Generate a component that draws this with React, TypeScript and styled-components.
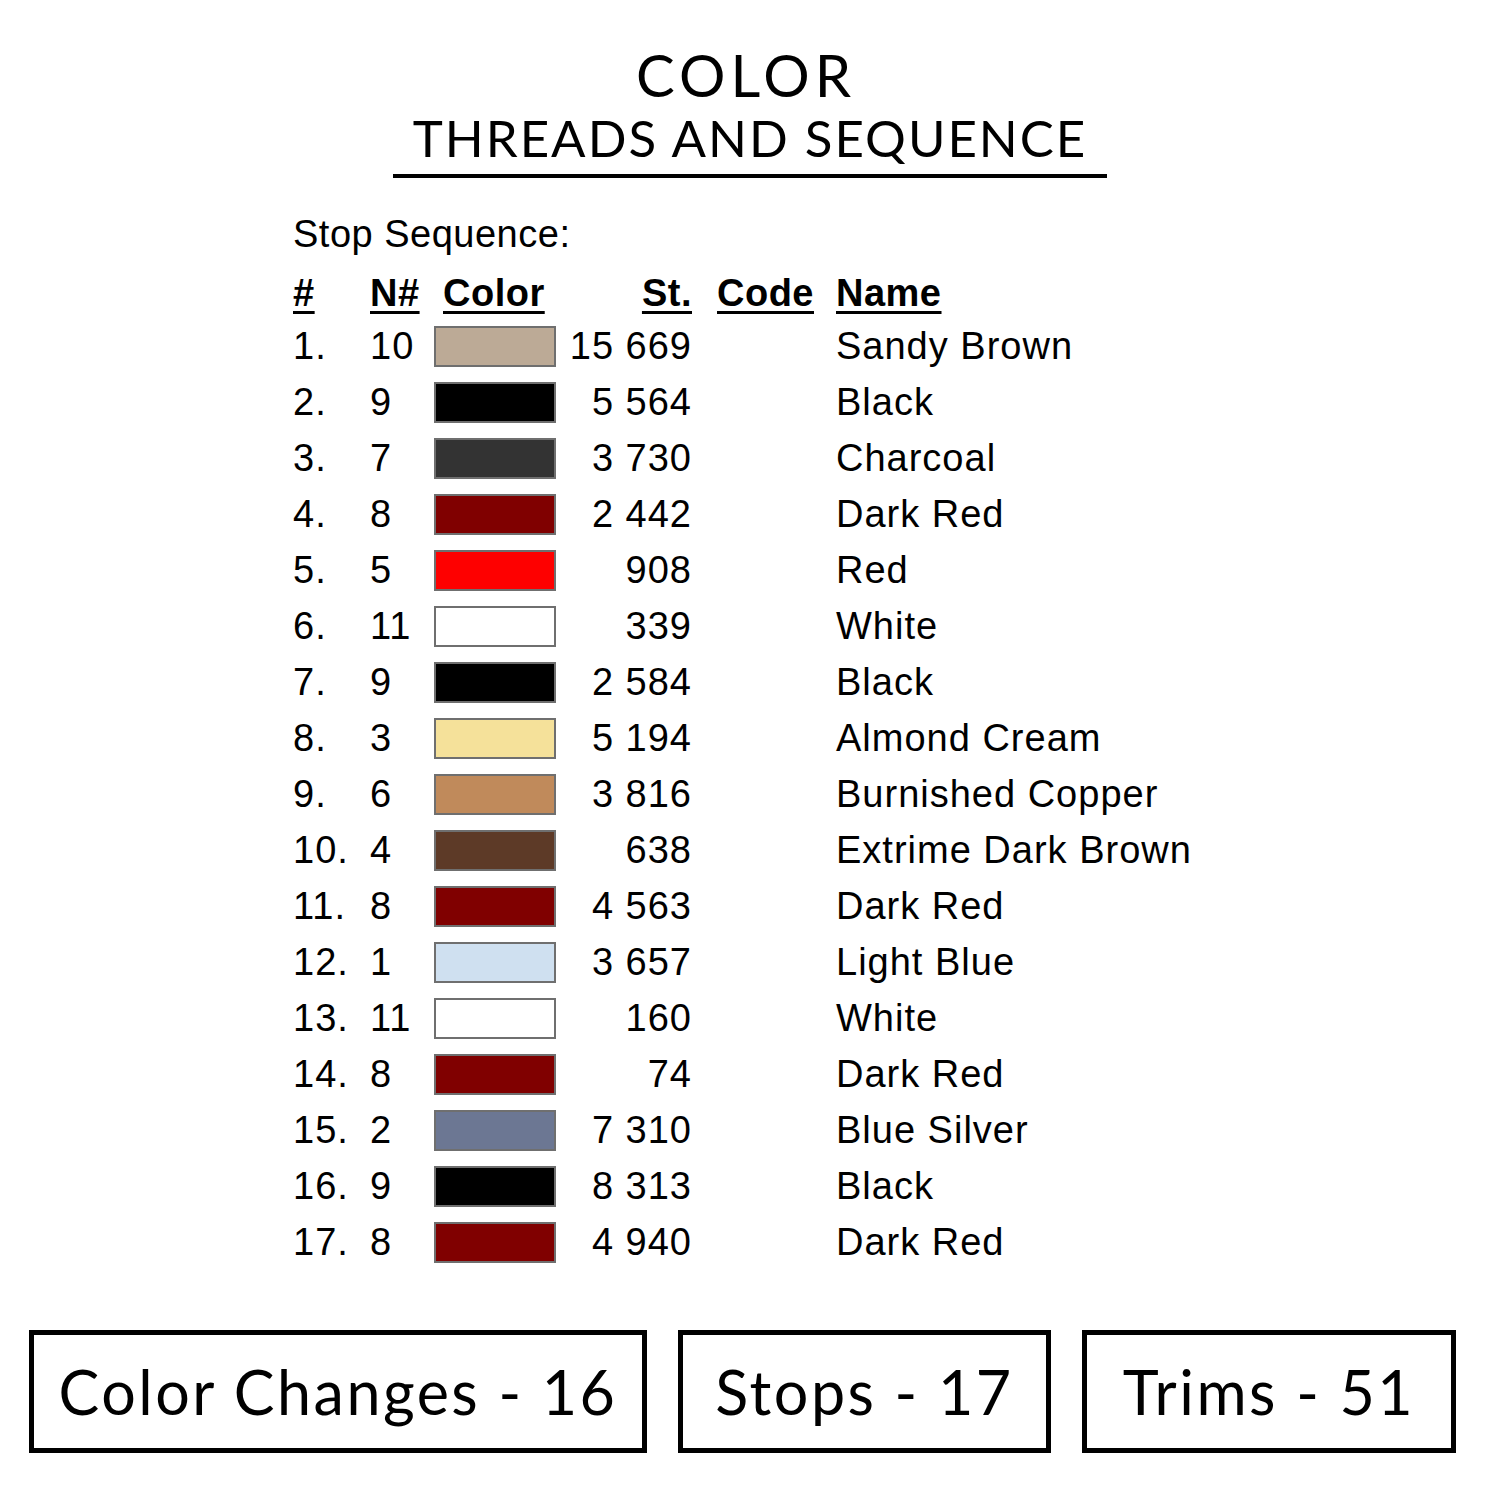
import React from 'react'
import styled, {createGlobalStyle} from 'styled-components'

// -------------------------------------------------------------
// Data.
// -------------------------------------------------------------

interface Stop {
  n: number
  color: string
  stitches: string
  name: string
}

const stops: Stop[] = [
  {n: 10, color: '#bcaa96', stitches: '15 669', name: 'Sandy Brown'},
  {n: 9, color: '#000000', stitches: '5 564', name: 'Black'},
  {n: 7, color: '#333333', stitches: '3 730', name: 'Charcoal'},
  {n: 8, color: '#800000', stitches: '2 442', name: 'Dark Red'},
  {n: 5, color: '#fe0000', stitches: '908', name: 'Red'},
  {n: 11, color: '#ffffff', stitches: '339', name: 'White'},
  {n: 9, color: '#000000', stitches: '2 584', name: 'Black'},
  {n: 3, color: '#f5e19a', stitches: '5 194', name: 'Almond Cream'},
  {n: 6, color: '#c08a5b', stitches: '3 816', name: 'Burnished Copper'},
  {n: 4, color: '#5d3a27', stitches: '638', name: 'Extrime Dark Brown'},
  {n: 8, color: '#800000', stitches: '4 563', name: 'Dark Red'},
  {n: 1, color: '#cfe0f0', stitches: '3 657', name: 'Light Blue'},
  {n: 11, color: '#ffffff', stitches: '160', name: 'White'},
  {n: 8, color: '#800000', stitches: '74', name: 'Dark Red'},
  {n: 2, color: '#6c7793', stitches: '7 310', name: 'Blue Silver'},
  {n: 9, color: '#000000', stitches: '8 313', name: 'Black'},
  {n: 8, color: '#800000', stitches: '4 940', name: 'Dark Red'}
]

const totals = [
  {label: 'Color Changes - 16', width: 618},
  {label: 'Stops - 17', width: 373},
  {label: 'Trims - 51', width: 374}
]

// -------------------------------------------------------------
// Components.
// -------------------------------------------------------------

const GlobalStyle = createGlobalStyle`
  html, body {
    margin: 0;
    padding: 0;
    background: #ffffff;
  }
`

const Page = styled.div`
  width: 1500px;
  height: 1500px;
  box-sizing: border-box;
  padding-top: 42px;

  color: #000000;
  background: #ffffff;
`

const Header = styled.header`
  display: flex;
  flex-direction: column;
  align-items: center;

  font-family: Lato, 'Open Sans', sans-serif;
`

const Heading = styled.h1`
  margin: 0 0 0 -8px;

  font-size: 58px;
  font-weight: 400;
  line-height: 66px;
  letter-spacing: 5px;
`

const Subheading = styled.h2`
  margin: 0;
  padding: 0 20px 6px;

  border-bottom: 4px solid #000000;

  font-size: 51px;
  font-weight: 400;
  line-height: 60px;
  letter-spacing: 2px;
`

const Sequence = styled.section`
  margin: 28px 0 0 293px;

  font-family: 'Liberation Sans', Arial, sans-serif;
  font-size: 38px;
  letter-spacing: 1px;
`

const Caption = styled.p`
  margin: 0;

  line-height: 56px;
  letter-spacing: 0.5px;
`

const Table = styled.div`
  display: grid;
  grid-template-columns: 77px 64px 122px 136px 144px auto;
  grid-auto-rows: 56px;
  align-items: center;
`

const Head = styled.div<{$indent?: number; $right?: boolean}>`
  align-self: start;
  padding: 5px 0 0 ${p => p.$indent || 0}px;

  font-weight: bold;
  line-height: 52px;
  letter-spacing: 0.5px;
  text-align: ${p => (p.$right ? 'right' : 'left')};
  text-decoration: underline;
  text-decoration-thickness: 3px;
  text-underline-offset: 5px;
`

const Cell = styled.div<{$right?: boolean}>`
  line-height: 56px;
  text-align: ${p => (p.$right ? 'right' : 'left')};
  white-space: nowrap;
`

const Swatch = styled.div<{$color: string}>`
  width: 122px;
  height: 41px;
  box-sizing: border-box;

  background: ${p => p.$color};
  border: 2px solid #6f6f6f;
`

const Totals = styled.footer`
  display: flex;
  gap: 31px;

  margin: 60px 0 0 29px;
`

const Total = styled.div<{$width: number}>`
  display: flex;
  align-items: center;
  justify-content: center;

  width: ${p => p.$width}px;
  height: 123px;
  box-sizing: border-box;

  border: 5px solid #000000;

  font-family: Lato, 'Open Sans', sans-serif;
  font-size: 61px;
  letter-spacing: 2.5px;
  white-space: nowrap;
`

// -------------------------------------------------------------
// Export.
// -------------------------------------------------------------

export default () => (
  <Page>
    <GlobalStyle />
    <Header>
      <Heading>COLOR</Heading>
      <Subheading>THREADS AND SEQUENCE</Subheading>
    </Header>

    <Sequence>
      <Caption>Stop Sequence:</Caption>
      <Table>
        <Head>#</Head>
        <Head>N#</Head>
        <Head $indent={9}>Color</Head>
        <Head $right>St.</Head>
        <Head $indent={25}>Code</Head>
        <Head>Name</Head>

        {stops.map((stop, i) => (
          <React.Fragment key={i}>
            <Cell>{i + 1}.</Cell>
            <Cell>{stop.n}</Cell>
            <Swatch $color={stop.color} />
            <Cell $right>{stop.stitches}</Cell>
            <Cell />
            <Cell>{stop.name}</Cell>
          </React.Fragment>
        ))}
      </Table>
    </Sequence>

    <Totals>
      {totals.map(t => (
        <Total key={t.label} $width={t.width}>
          {t.label}
        </Total>
      ))}
    </Totals>
  </Page>
)
